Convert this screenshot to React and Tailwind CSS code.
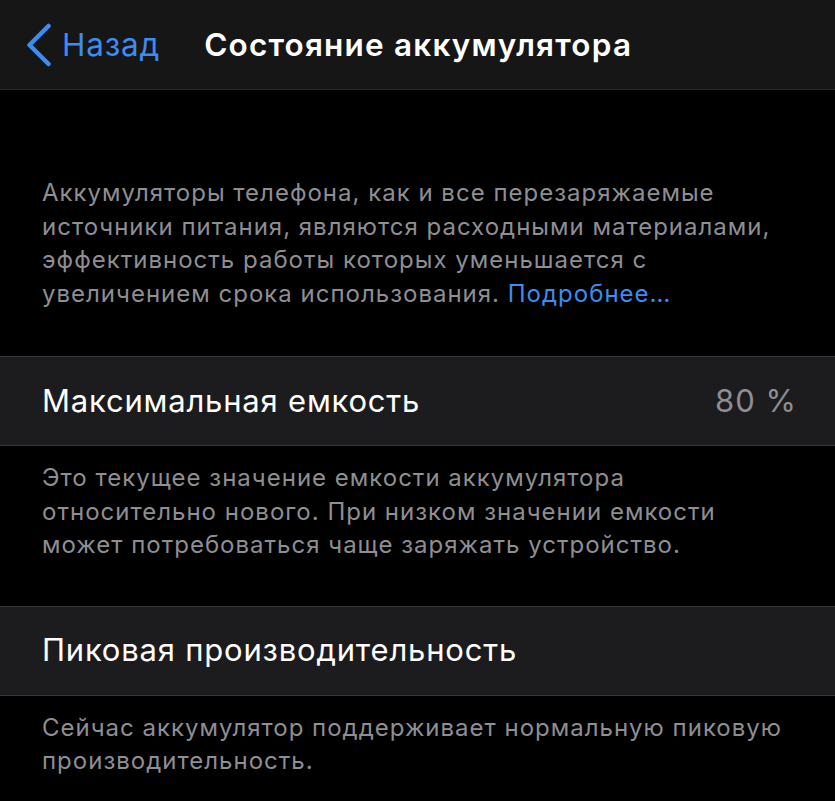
import { useState } from 'react';

const font = { fontFamily: 'Inter, "Noto Sans", sans-serif' };

function Row({ title, value }) {
  return (
    <div className="h-[90px] border-y border-[#38383a] bg-[#1c1c1e] flex items-center justify-between pl-[42px] pr-[38px]">
      <span className="text-[31px] text-white tracking-[0.8px]">{title}</span>
      {value && <span className="text-[31px] text-[#8e8e93] tracking-[1px]">{value}</span>}
    </div>
  );
}

function Footer({ lines, link, className }) {
  return (
    <p className={`px-[42px] text-[24px] leading-[33.5px] tracking-[1px] text-[#8e8e93] whitespace-nowrap ${className}`}>
      {lines.map((l, i) => (
        <span key={i}>
          {l}
          {i < lines.length - 1 ? <br /> : null}
        </span>
      ))}
      {link && <span className="text-[#3c8cf2]"> {link}</span>}
    </p>
  );
}

export default function App() {
  const [rows] = useState([
    {
      title: 'Максимальная емкость',
      value: '80 %',
      note: [
        'Это текущее значение емкости аккумулятора',
        'относительно нового. При низком значении емкости',
        'может потребоваться чаще заряжать устройство.',
      ],
    },
    {
      title: 'Пиковая производительность',
      note: ['Сейчас аккумулятор поддерживает нормальную пиковую', 'производительность.'],
    },
  ]);

  return (
    <div className="w-[835px] h-[801px] bg-black overflow-hidden" style={font}>
      <div className="h-[90px] bg-[#161616] border-b border-[#2a2a2a] flex items-center">
        <button className="flex items-center pl-[26px] text-[#3c8cf2]">
          <svg width="26" height="44" viewBox="0 0 26 44" fill="none">
            <path d="M22.5 3 L3.5 22 L22.5 41" stroke="currentColor" strokeWidth="4.5" strokeLinecap="round" strokeLinejoin="round" />
          </svg>
          <span className="ml-[10px] text-[31.5px] tracking-[0.8px]">Назад</span>
        </button>
        <h1 className="ml-[44px] text-[31.5px] font-semibold text-white tracking-[1.2px]">Состояние аккумулятора</h1>
      </div>

      <Footer
        className="pt-[86px] pb-[46px]"
        lines={[
          'Аккумуляторы телефона, как и все перезаряжаемые',
          'источники питания, являются расходными материалами,',
          'эффективность работы которых уменьшается с',
          'увеличением срока использования.',
        ]}
        link="Подробнее…"
      />

      {rows.map(r => (
        <div key={r.title}>
          <Row title={r.title} value={r.value} />
          <Footer className="pt-[15px] pb-[44px]" lines={r.note} />
        </div>
      ))}
    </div>
  );
}
